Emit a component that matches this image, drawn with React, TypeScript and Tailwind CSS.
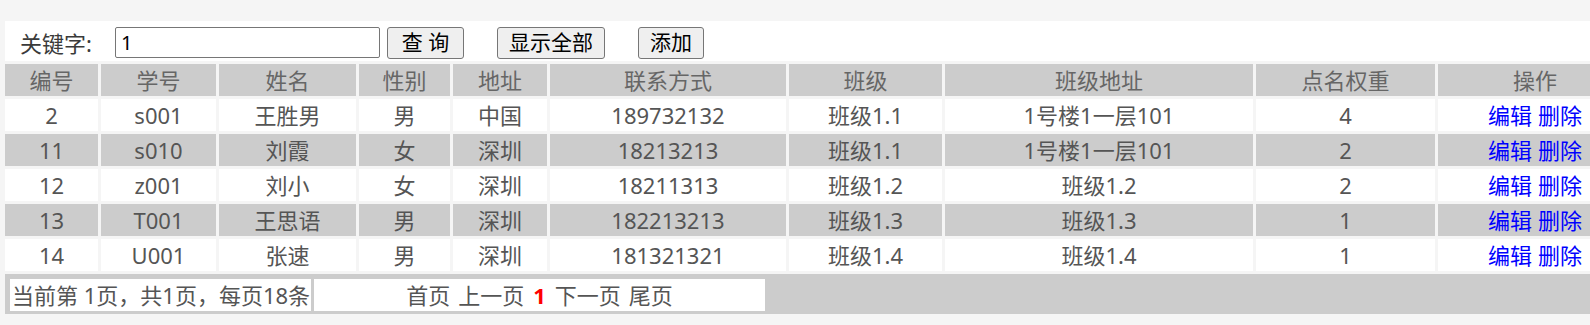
const COLS = ["编号", "学号", "姓名", "性别", "地址", "联系方式", "班级", "班级地址", "点名权重", "操作"];

const ROWS = [
  ["2", "s001", "王胜男", "男", "中国", "189732132", "班级1.1", "1号楼1一层101", "4"],
  ["11", "s010", "刘霞", "女", "深圳", "18213213", "班级1.1", "1号楼1一层101", "2"],
  ["12", "z001", "刘小", "女", "深圳", "18211313", "班级1.2", "班级1.2", "2"],
  ["13", "T001", "王思语", "男", "深圳", "182213213", "班级1.3", "班级1.3", "1"],
  ["14", "U001", "张速", "男", "深圳", "181321321", "班级1.4", "班级1.4", "1"],
];

const font = { fontFamily: '"Noto Sans", "Noto Sans CJK SC", sans-serif' };

export default function App() {
  return (
    <div
      className="w-[1590px] h-[325px] overflow-hidden bg-[#f5f5f5] pt-[21px] pl-[5px] text-[22px] leading-none"
      style={font}
    >
      <div className="w-[1630px] flex flex-col gap-[3px]">
        {/* search bar */}
        <div className="h-[40px] bg-white flex items-center pl-[15px] pt-[3px]">
          <span className="w-[95px] text-[#3a3a3a]">关键字:</span>
          <input
            defaultValue="1"
            className="w-[265px] h-[31px] border border-[#767676] rounded-[2px] px-[5px] text-[20px] text-black bg-white outline-none"
            style={font}
          />
          <button className="ml-[7px] w-[77px] h-[32px] border border-[#767676] rounded-[3px] bg-[#efefef] text-black text-[21px]">
            查&nbsp;询
          </button>
          <button className="ml-[33px] w-[108px] h-[32px] border border-[#767676] rounded-[3px] bg-[#efefef] text-black text-[21px]">
            显示全部
          </button>
          <button className="ml-[33px] w-[66px] h-[32px] border border-[#767676] rounded-[3px] bg-[#efefef] text-black text-[21px]">
            添加
          </button>
        </div>

        {/* table */}
        <div className="grid grid-cols-[93px_115px_137px_91px_94px_236px_153px_308px_179px_194px] gap-[3px]">
          {COLS.map((c) => (
            <div key={c} className="h-[32px] bg-[#cccccc] flex items-center justify-center text-[#666]">
              {c}
            </div>
          ))}
          {ROWS.map((r, i) => {
            const bg = i % 2 === 1 ? "bg-[#cccccc]" : "bg-white";
            return [
              ...r.map((v, j) => (
                <div key={`${i}-${j}`} className={`h-[32px] ${bg} flex items-center justify-center text-[#555]`}>
                  {v}
                </div>
              )),
              <div key={`${i}-op`} className={`h-[32px] ${bg} flex items-center justify-center gap-[6px] text-[#0000ff]`}>
                <a href="#">编辑</a>
                <a href="#">删除</a>
              </div>,
            ];
          })}
        </div>

        {/* pager */}
        <div className="h-[40px] bg-[#cccccc] flex items-start gap-[3px] pl-[5px] pt-[5px]">
          <div className="w-[301px] h-[32px] bg-white flex items-center pl-[2px] text-[#555] whitespace-nowrap">
            当前第 1页，共1页，每页18条
          </div>
          <div className="w-[451px] h-[32px] bg-white flex items-center justify-center gap-[8px] text-[#555] whitespace-nowrap">
            <span>首页</span>
            <span>上一页</span>
            <span className="text-[#ff0000] font-bold mx-[1px]">1</span>
            <span>下一页</span>
            <span>尾页</span>
          </div>
        </div>
      </div>
    </div>
  );
}
